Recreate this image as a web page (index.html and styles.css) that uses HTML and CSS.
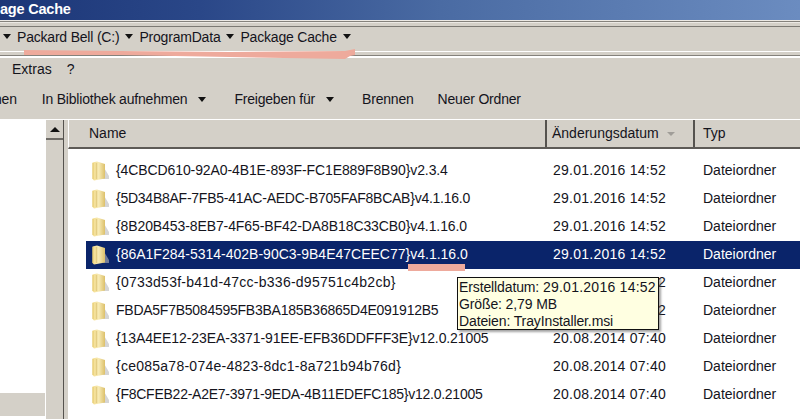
FILE: index.html
```html
<!DOCTYPE html>
<html lang="de">
<head>
<meta charset="utf-8">
<title>Package Cache</title>
<link rel="stylesheet" href="styles.css">
</head>
<body>
<svg class="defs" width="0" height="0" aria-hidden="true">
  <defs>
    <linearGradient id="fg" x1="0" y1="0" x2="1" y2="0">
      <stop offset="0" stop-color="#f4dc8c"/><stop offset="0.5" stop-color="#f7eab4"/><stop offset="1" stop-color="#dcc06a"/>
    </linearGradient>
    <symbol id="folder" viewBox="0 0 18 20">
      <path d="M11 5 L17 15 L17 18 L11 18Z" fill="#b9b9b9" opacity=".6"/>
      <path d="M0.5 1.5 L5 0.5 L13 3 L13 17.5 L2 19.5 L0.5 18Z" fill="url(#fg)"/>
      <path d="M4.5 2 L4.5 18" stroke="#cfb25a" stroke-width="1.4" opacity=".45"/>
      <path d="M1 2 L1 18" stroke="#e3c96f" stroke-width="1"/>
    </symbol>
  </defs>
</svg>
<div class="window">
  <div class="titlebar">age Cache</div>
  <div class="rule-top"></div>
  <div class="address">
    <span class="arrow first"></span>
    <span class="crumb">Packard Bell (C:)</span><span class="arrow"></span>
    <span class="crumb">ProgramData</span><span class="arrow"></span>
    <span class="crumb">Package Cache</span><span class="arrow"></span>
  </div>
  <div class="rule-mid"></div>
  <div class="menu"><span>Extras</span><span>?</span></div>
  <div class="toolbar">
    <span class="tool cut">nen</span>
    <span class="tool">In Bibliothek aufnehmen<span class="arrow"></span></span>
    <span class="tool">Freigeben für<span class="arrow"></span></span>
    <span class="tool">Brennen</span>
    <span class="tool">Neuer Ordner</span>
  </div>
  <div class="main">
    <div class="side">
      <div class="tree"></div>
      <div class="side-foot"></div>
    </div>
    <div class="scroll"><div class="scroll-up"><span class="up"></span></div></div>
    <div class="split"></div>
    <div class="pane">
      <div class="head">
        <div class="col-name">Name</div>
        <div class="col-date">Änderungsdatum<span class="sort"></span></div>
        <div class="col-type">Typ</div>
      </div>
      <div class="rows">
        <div class="row"><svg class="ico"><use href="#folder"/></svg><span class="n snug">{4CBCD610-92A0-4B1E-893F-FC1E889F8B90}v2.3.4</span><span class="d">29.01.2016 14:52</span><span class="t">Dateiordner</span></div>
        <div class="row"><svg class="ico"><use href="#folder"/></svg><span class="n tight">{5D34B8AF-7FB5-41AC-AEDC-B705FAF8BCAB}v4.1.16.0</span><span class="d">29.01.2016 14:52</span><span class="t">Dateiordner</span></div>
        <div class="row"><svg class="ico"><use href="#folder"/></svg><span class="n snug">{8B20B453-8EB7-4F65-BF42-DA8B18C33CB0}v4.1.16.0</span><span class="d">29.01.2016 14:52</span><span class="t">Dateiordner</span></div>
        <div class="row sel"><svg class="ico"><use href="#folder"/></svg><span class="n">{86A1F284-5314-402B-90C3-9B4E47CEEC77}v4.1.16.0</span><span class="d">29.01.2016 14:52</span><span class="t">Dateiordner</span></div>
        <div class="row"><svg class="ico"><use href="#folder"/></svg><span class="n wide">{0733d53f-b41d-47cc-b336-d95751c4b2cb}</span><span class="d">29.01.2016 14:52</span><span class="t">Dateiordner</span></div>
        <div class="row"><svg class="ico"><use href="#folder"/></svg><span class="n tight">FBDA5F7B5084595FB3BA185B36865D4E091912B5</span><span class="d">29.01.2016 14:52</span><span class="t">Dateiordner</span></div>
        <div class="row"><svg class="ico"><use href="#folder"/></svg><span class="n snug">{13A4EE12-23EA-3371-91EE-EFB36DDFFF3E}v12.0.21005</span><span class="d">20.08.2014 07:40</span><span class="t">Dateiordner</span></div>
        <div class="row"><svg class="ico"><use href="#folder"/></svg><span class="n wide">{ce085a78-074e-4823-8dc1-8a721b94b76d}</span><span class="d">20.08.2014 07:40</span><span class="t">Dateiordner</span></div>
        <div class="row"><svg class="ico"><use href="#folder"/></svg><span class="n tight">{F8CFEB22-A2E7-3971-9EDA-4B11EDEFC185}v12.0.21005</span><span class="d">20.08.2014 07:40</span><span class="t">Dateiordner</span></div>
      </div>
    </div>
  </div>
</div>
<div class="tooltip">
  <div>Erstelldatum: <span class="stamp">29.01.2016 14:52</span></div>
  <div>Größe: 2,79 MB</div>
  <div>Dateien: TrayInstaller.msi</div>
</div>
<svg class="marks" width="800" height="419" viewBox="0 0 800 419" aria-hidden="true">
  <path d="M24 50 L24 55 L120 55 L230 57 L345 59 L350 56 L355 55 L355 49 L345 51 L230 52 L120 51Z" fill="#eeaa9c"/>
  <path d="M408 264 L465 264 L465 271 L408 271Z" fill="#eeaa9c"/>
</svg>
</body>
</html>
```
FILE: styles.css
```css
* { box-sizing: border-box; }
html, body { margin: 0; padding: 0; }
body {
  width: 800px; height: 419px; overflow: hidden; position: relative;
  background: #d4d0c8; color: #14141c;
  font-family: "Liberation Sans", "Noto Sans", sans-serif;
  font-size: 14px; line-height: 16px;
}
.defs { position: absolute; }
.window { display: flex; flex-direction: column; height: 419px; }
.titlebar {
  height: 20px; flex: none; padding-top: 1px; letter-spacing: -.2px;
  background: linear-gradient(90deg, #1c3677 0%, #2a4788 25%, #4a6ba3 55%, #6b8cc0 100%);
  color: #fff; font-weight: 700; font-size: 14.5px; line-height: 16px;
}
.rule-top {
  height: 7px; flex: none;
  border-top: 1px solid #ece9e4; border-bottom: 1px solid #7d7a74;
  background: linear-gradient(#85827c 0 1px, #ece9e4 1px 2px, #d4d0c8 2px);
}
.address { height: 24px; flex: none; display: flex; align-items: center; padding-left: 3px; padding-bottom: 4px; }
.crumb { letter-spacing: -.2px; }
.arrow {
  display: inline-block; width: 0; height: 0;
  border-left: 4.5px solid transparent; border-right: 4.5px solid transparent; border-top: 5px solid #111;
}
.address .arrow { margin: 0 6px 2px 6px; }
.address .arrow.first { margin-left: 0; margin-right: 6px; }
.rule-mid {
  height: 7px; flex: none;
  border-top: 1px solid #fff; border-bottom: 2px solid #fff;
  background: linear-gradient(#d4d0c8 0 3px, #85827c 3px);
}
.menu { height: 25px; flex: none; display: flex; align-items: center; padding-left: 12px; padding-bottom: 3px; gap: 15px; }
.toolbar { height: 36px; flex: none; display: flex; align-items: center; padding-bottom: 4px; letter-spacing: -.2px; }
.tool { margin-right: 24px; white-space: nowrap; }
.tool.cut { margin-left: -6px; margin-right: 25px; }
.tool .arrow { margin-left: 11px; margin-right: 4px; vertical-align: 2px; }
.main { flex: 1; display: flex; min-height: 0; border-top: 1px solid #fff; }
.side { width: 45px; flex: none; display: flex; flex-direction: column; }
.tree { height: 273px; background: #fff; }
.side-foot { flex: 1; border-bottom: 3px solid #fff; }
.scroll { width: 18px; flex: none; border-left: 1px solid #fff; }
.scroll-up { height: 20px; border-bottom: 2px solid #6e6b66; display: flex; align-items: center; justify-content: center; }
.up { width: 0; height: 0; border-left: 5px solid transparent; border-right: 5px solid transparent; border-bottom: 5px solid #111; }
.split { width: 5px; flex: none; border-left: 1px solid #55524e; }
.pane { flex: 1; background: #fff; display: flex; flex-direction: column; min-width: 0; }
.head { height: 29px; flex: none; display: flex; align-items: center; background: #d4d0c8; border-left: 1px solid #fff; border-bottom: 2px solid #5d5a56; }
.col-name { width: 478px; padding-left: 20px; height: 100%; line-height: 27px; border-right: 2px solid #55524e; }
.col-date { width: 148px; padding-left: 5px; height: 100%; line-height: 27px; border-right: 2px solid #55524e; }
.col-type { padding-left: 8px; padding-bottom: 1px; }
.sort { display: inline-block; width: 0; height: 0; margin-left: 8px; vertical-align: 2px; border-left: 4px solid transparent; border-right: 4px solid transparent; border-top: 4px solid #a09d98; }
.rows { padding-top: 8px; }
.row { height: 28px; display: flex; align-items: center; margin-left: 18px; white-space: nowrap; padding-bottom: 2px; }
.ico { width: 18px; height: 20px; flex: none; margin-left: 6px; margin-top: 2px; }
.n { width: 437px; flex: none; margin-left: 6px; }
.n.snug { letter-spacing: -.1px; }
.n.tight { letter-spacing: -.25px; }
.n.wide { letter-spacing: .25px; }
.d { width: 150px; flex: none; letter-spacing: .25px; }
.sel { background: #0a246a; color: #fff; }
.tooltip {
  position: absolute; left: 457px; top: 277px; width: 202px; height: 53px;
  background: #ffffe1; border: 1px solid #111; padding: 1px 0 0 1px; letter-spacing: -.12px;
  box-shadow: 2px 2px 2px rgba(90,90,90,.55); color: #14141c; line-height: 17px; white-space: nowrap;
}
.stamp { letter-spacing: .25px; }
.marks { position: absolute; left: 0; top: 0; pointer-events: none; }
```
